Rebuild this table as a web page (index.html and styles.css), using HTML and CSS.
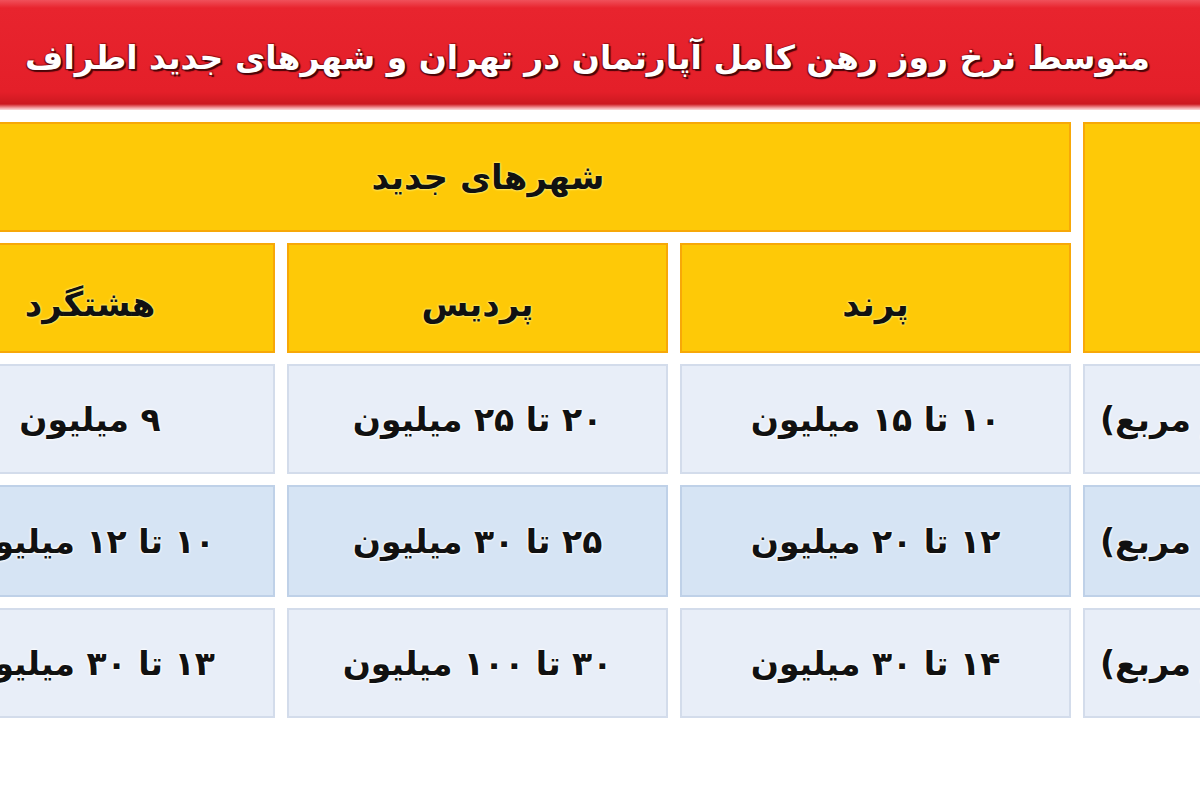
FILE: index.html
```html
<!DOCTYPE html>
<html lang="fa">
<head>
<meta charset="utf-8">
<title>متوسط نرخ روز رهن کامل آپارتمان</title>
<link rel="stylesheet" href="styles.css">
</head>
<body>
<div class="page">
  <header class="banner">
    <h1 class="title" dir="rtl">متوسط نرخ روز رهن کامل آپارتمان در تهران و شهرهای جدید اطراف</h1>
  </header>
  <div class="table" dir="ltr">
    <div class="cell head span3" dir="rtl">شهرهای جدید</div>
    <div class="cell head tall" dir="rtl">متراژ</div>

    <div class="cell head" dir="rtl">هشتگرد</div>
    <div class="cell head" dir="rtl">پردیس</div>
    <div class="cell head" dir="rtl">پرند</div>

    <div class="cell data" dir="rtl">۹ میلیون</div>
    <div class="cell data" dir="rtl">۲۰ تا ۲۵ میلیون</div>
    <div class="cell data" dir="rtl">۱۰ تا ۱۵ میلیون</div>
    <div class="cell data label" dir="rtl">کوچک (زیر ۷۵ متر مربع)</div>

    <div class="cell data alt" dir="rtl">۱۰ تا ۱۲ میلیون</div>
    <div class="cell data alt" dir="rtl">۲۵ تا ۳۰ میلیون</div>
    <div class="cell data alt" dir="rtl">۱۲ تا ۲۰ میلیون</div>
    <div class="cell data alt label" dir="rtl">متوسط (۷۵ تا ۱۲۰ مربع)</div>

    <div class="cell data" dir="rtl">۱۳ تا ۳۰ میلیون</div>
    <div class="cell data" dir="rtl">۳۰ تا ۱۰۰ میلیون</div>
    <div class="cell data" dir="rtl">۱۴ تا ۳۰ میلیون</div>
    <div class="cell data label" dir="rtl">بزرگ (بالای ۱۲۰ متر مربع)</div>
  </div>
</div>
</body>
</html>
```
FILE: styles.css
```css
html, body {
  margin: 0;
  padding: 0;
  background: #ffffff;
}

body {
  width: 1200px;
  height: 800px;
  overflow: hidden;
  font-family: "DejaVu Sans", "Noto Sans", sans-serif;
}

.page {
  width: 1200px;
  height: 800px;
  overflow: hidden;
}

.banner {
  height: 110px;
  box-sizing: border-box;
  display: flex;
  align-items: center;
  justify-content: flex-end;
  padding-right: 50px;
  background: linear-gradient(to bottom, #f0505a 0px, #e8242e 8px, #e41f29 92px, #cc1820 104px, #f4a0a4 108px, #fbdcdd 110px);
  overflow: hidden;
}

.title {
  margin: 0;
  white-space: nowrap;
  color: #ffffff;
  font-size: 33px;
  font-weight: bold;
  line-height: 1;
  padding-top: 4px;
  text-shadow: 2px 2px 1px #4a0508, -1px 1px 1px #7a0a0f, 1px -1px 1px #9a0f14;
}

.table {
  margin-top: 12px;
  margin-left: -95px;
  width: 1530px;
  display: grid;
  grid-template-columns: 370px 381px 391px 300px;
  grid-template-rows: 110px 110px 110px 112px 110px;
  column-gap: 12px;
  row-gap: 11px;
}

.cell {
  box-sizing: border-box;
  display: flex;
  align-items: center;
  justify-content: center;
  white-space: nowrap;
  font-weight: bold;
  color: #111111;
  overflow: hidden;
}

.head {
  background: #fec907;
  box-shadow: inset 0 0 0 2px #f7a808;
  font-size: 34px;
  padding-top: 12px;
  text-shadow: 0 0 3px #fff27a, 0 0 2px #fff27a, 0 0 1px #fff8b0;
}

.span3 {
  grid-column: 1 / 4;
  padding-top: 0;
}

.tall {
  grid-column: 4;
  grid-row: 1 / 3;
  color: transparent;
  text-shadow: none;
  justify-content: flex-end;
}

.data {
  background: #e8eef8;
  box-shadow: inset 0 0 0 2px #d3dceb;
  font-size: 33px;
  text-shadow: 0 0 3px #ffffff, 0 0 3px #ffffff, 0 0 2px #ffffff;
}

.alt {
  background: #d6e4f4;
  box-shadow: inset 0 0 0 2px #bfd1e8;
}

.label {
  justify-content: flex-start;
  direction: ltr;
  padding-left: 17px;
}
```
